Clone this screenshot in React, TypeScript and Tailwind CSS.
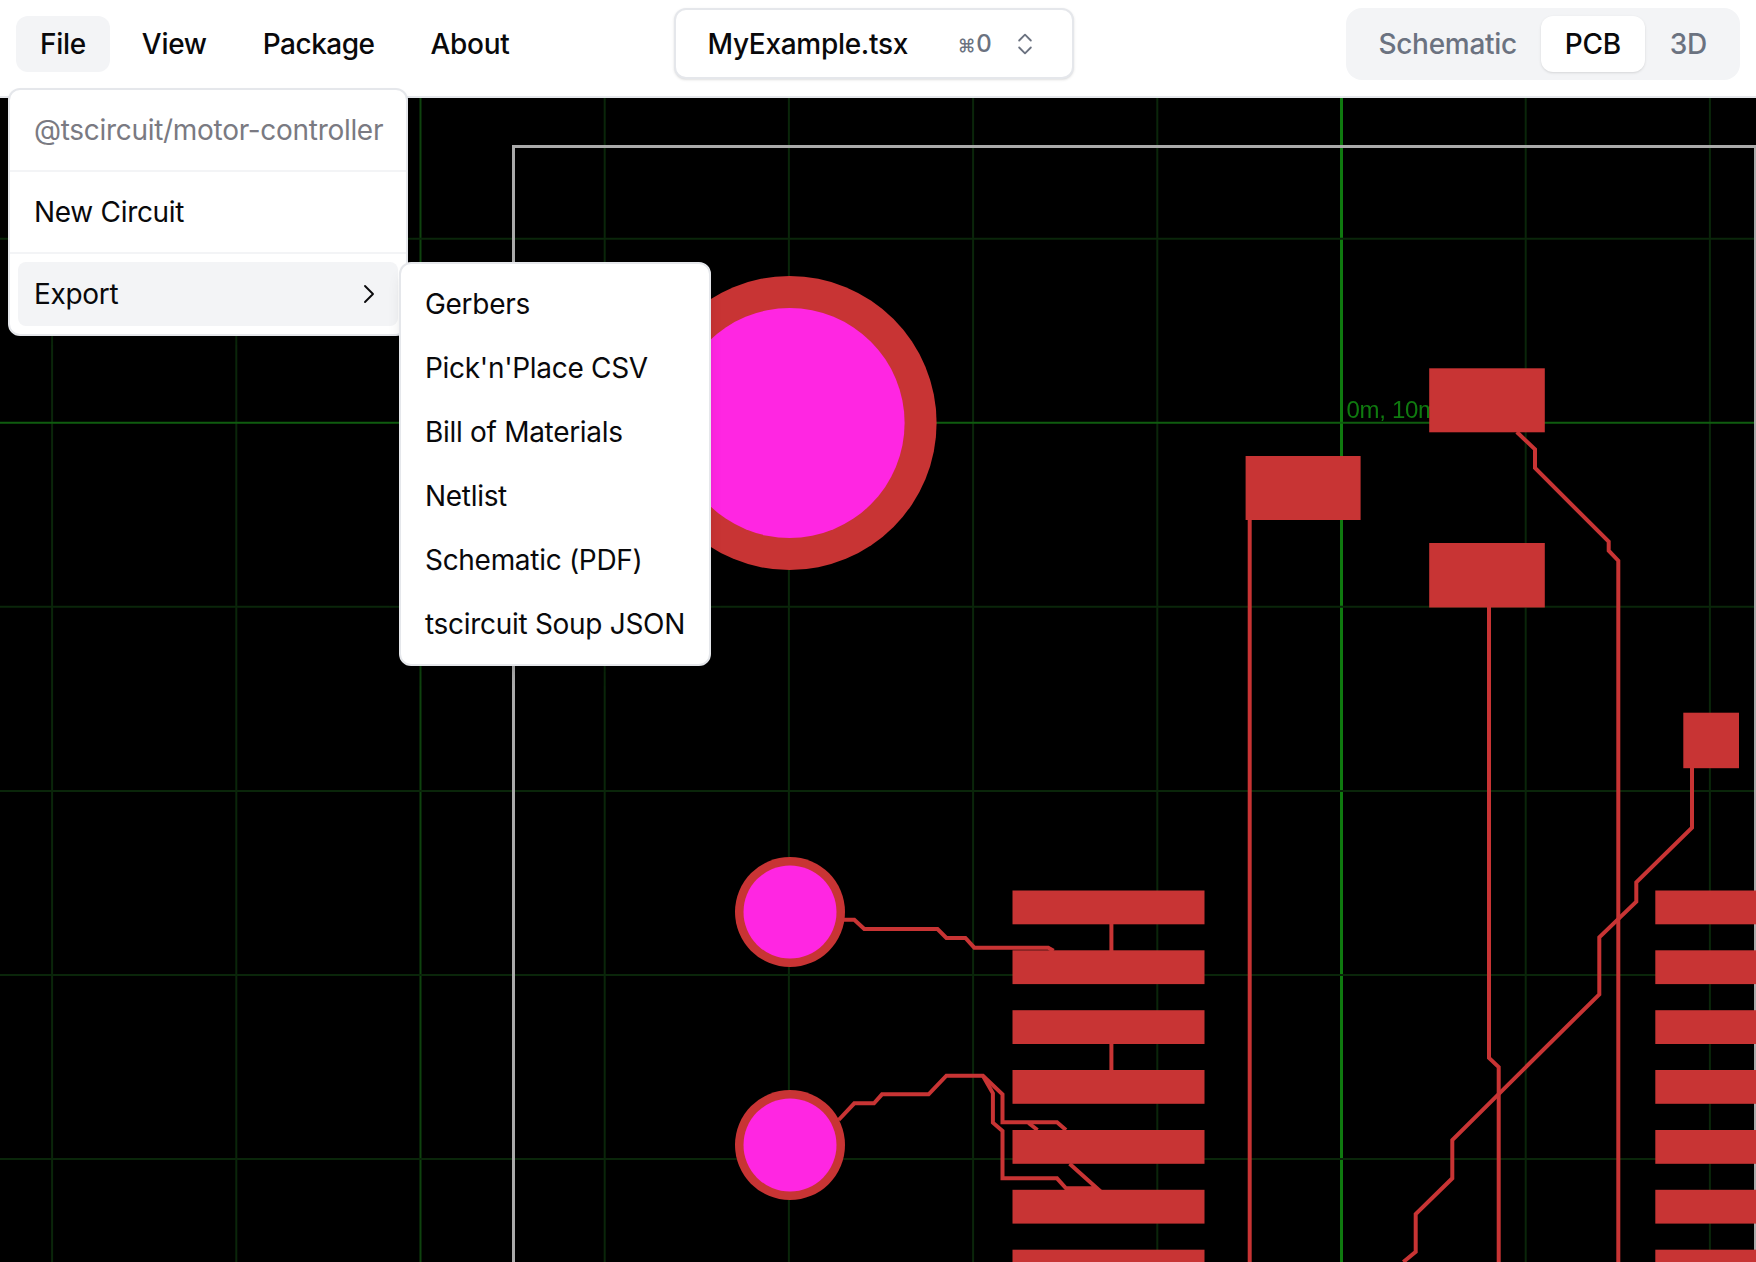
import { ChevronRight, ChevronsUpDown } from "lucide-react";

const verticals = [52.1, 236.3, 420.5, 604.7, 788.9, 973.1, 1157.3, 1341.5, 1525.7, 1709.9];
const horizontals = [238.7, 422.7, 606.8, 791, 975, 1159];
const stackYs = [890.5, 950.3, 1010.2, 1070, 1130, 1189.8, 1249.7];

const rects = [
  [1429.2, 368.3, 115.6, 64],
  [1245.6, 456, 115, 64],
  [1429.2, 543, 115.6, 64.5],
  [1683.3, 712.7, 55.7, 55.5],
];

const traces = [
  "1249.7,520 1249.7,1262",
  "1489,607 1489,1058 1498.7,1067 1498.7,1262",
  "1516.8,432 1535,449.3 1535,468 1608.7,541.7 1608.7,550.7 1618.3,560.7 1618.3,1262",
  "1692,768 1692,827.7 1636.3,882.3 1636.3,901.7 1599.3,937.3 1599.3,994.3 1452.3,1140 1452.3,1178.3 1415.7,1214 1415.7,1251.7 1403.3,1262",
  "844,919.7 854.3,919.7 864.3,929 937.5,929 946.4,938 965.4,938 974.3,947.7 1048.2,947.7 1053.6,950.7",
  "838.6,1120 854.3,1103.3 874,1103.3 882,1094.3 928.6,1094.3 946.4,1075.7 982.9,1075.7 1002.5,1094.3 1002.5,1122.3 1057,1122.3 1066,1130",
  "982.9,1075.7 992.9,1093.3 992.9,1122.7 1002.5,1131 1002.5,1178.3 1057,1178.3 1066,1188.3 1097,1188.3 1069.6,1163.7",
  "1028.6,1123 1037.5,1130",
  "1111.4,924 1111.4,951",
  "1111.4,1043 1111.4,1071",
];

const submenu = ["Gerbers", "Pick'n'Place CSV", "Bill of Materials", "Netlist", "Schematic (PDF)", "tscircuit Soup JSON"];

export default function App() {
  return (
    <div className="relative flex h-[1262px] w-full flex-col overflow-hidden bg-white [font-family:Inter,sans-serif] text-[28px] tracking-[-0.3px] text-[#09090b]">
      <header className="flex h-[98px] shrink-0 items-start border-b-2 border-[#e5e7eb] bg-white pl-4 pr-4 pt-2">
        <nav className="mt-2 flex gap-2 font-medium">
          <div className="flex h-14 items-center rounded-xl bg-[#f3f4f6] px-6">File</div>
          <div className="flex h-14 items-center rounded-xl px-6">View</div>
          <div className="flex h-14 items-center rounded-xl px-6 tracking-[-0.5px]">Package</div>
          <div className="flex h-14 items-center rounded-xl px-6">About</div>
        </nav>
        <div className="ml-[141px] flex h-[71px] w-[400px] items-center rounded-xl border-2 border-[#e5e7eb] bg-white pl-[31px] shadow-sm">
          <span className="font-medium">MyExample.tsx</span>
          <span className="ml-auto flex items-baseline gap-px font-medium text-[#6b7280]">
            <span className="text-[18px]">⌘</span>
            <span className="text-2xl">0</span>
          </span>
          <ChevronsUpDown size={28} strokeWidth={1.6} className="ml-5 mr-[33px] text-[#6b7280]" />
        </div>
        <div className="ml-auto flex h-[72px] items-center rounded-2xl bg-[#f3f4f6] p-2 font-medium text-[#6b7280]">
          <div className="flex h-14 items-center px-6">Schematic</div>
          <div className="flex h-14 items-center rounded-xl bg-white px-6 text-[#09090b] shadow-sm">PCB</div>
          <div className="flex h-14 items-center px-[25px]">3D</div>
        </div>
      </header>

      <main className="min-h-0 flex-1 bg-black">
        <svg viewBox="0 98 1756 1164" className="block h-full w-full blur-[0.6px]">
          {verticals.map((x) => (
            <line
              key={x}
              x1={x}
              x2={x}
              y1={98}
              y2={1262}
              stroke={x === 1341.5 ? "#0f7a0f" : x === 420.5 ? "#0e430e" : "#0a260a"}
              strokeWidth={x === 1341.5 ? 3 : 2}
            />
          ))}
          {horizontals.map((y) => (
            <line key={y} x1={0} x2={1756} y1={y} y2={y} stroke={y === 422.7 ? "#0f5c0f" : "#0a260a"} strokeWidth={2} />
          ))}
          <path d="M513.5 1262V146.5H1756" fill="none" stroke="#aaaaaa" strokeWidth={3} />
          <line x1={1755.5} x2={1755.5} y1={146} y2={1262} stroke="#aaaaaa" strokeWidth={3} />
          <text x={1346.5} y={418} fill="#0f7a0f" fontSize={24} fontFamily="'Liberation Sans', sans-serif">
            0m, 10mm
          </text>
          {traces.map((points) => (
            <polyline key={points} points={points} fill="none" stroke="#c83434" strokeWidth={4} />
          ))}
          {rects.map(([x, y, w, h]) => (
            <rect key={y} x={x} y={y} width={w} height={h} fill="#c83434" />
          ))}
          {stackYs.map((y) => (
            <rect key={y} x={1012.5} y={y} width={192} height={33.8} fill="#c83434" />
          ))}
          {stackYs.map((y) => (
            <rect key={y} x={1655.3} y={y} width={101} height={33.8} fill="#c83434" />
          ))}
          <circle cx={789.6} cy={423} r={147} fill="#c83434" />
          <circle cx={789.6} cy={423} r={115} fill="#ff26e2" />
          <circle cx={790} cy={912} r={55} fill="#c83434" />
          <circle cx={790} cy={912} r={46.5} fill="#ff26e2" />
          <circle cx={790} cy={1145} r={55} fill="#c83434" />
          <circle cx={790} cy={1145} r={46.5} fill="#ff26e2" />
        </svg>
      </main>

      <div className="absolute left-2 top-[88px] w-[400px] rounded-xl border-2 border-[#e5e7eb] bg-white shadow-md">
        <div className="p-2">
          <div className="flex h-16 items-center whitespace-nowrap px-4 text-[#7a7a82]">@tscircuit/motor-controller</div>
        </div>
        <div className="h-0.5 bg-[#f3f4f6]" />
        <div className="p-2">
          <div className="flex h-16 items-center px-4">New Circuit</div>
        </div>
        <div className="h-0.5 bg-[#f3f4f6]" />
        <div className="p-2">
          <div className="flex h-16 items-center rounded-lg bg-[#f3f4f6] pl-4 pr-[13px]">
            Export
            <ChevronRight size={32} strokeWidth={1.4} className="ml-auto" />
          </div>
        </div>
      </div>

      <div className="absolute left-[399px] top-[262px] rounded-xl border-2 border-[#e5e7eb] bg-white p-2 shadow-lg">
        {submenu.map((item) => (
          <div key={item} className="flex h-16 items-center px-4">
            {item}
          </div>
        ))}
      </div>
    </div>
  );
}
